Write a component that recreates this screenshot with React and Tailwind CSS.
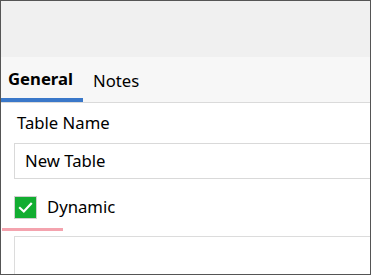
export default function App() {
  return (
    <div className="w-[372px] h-[276px] bg-white">
      <div
        className="w-[371px] h-[275px] border border-[#555555] bg-white overflow-hidden flex flex-col"
        style={{ fontFamily: '"Noto Sans", "Open Sans", sans-serif' }}
      >
        <div className="h-[56px] shrink-0 bg-[#f0f0f0]" />
        <div className="h-[45px] shrink-0 bg-[#f7f7f7] flex items-end">
          <div className="w-[82px] h-full flex flex-col">
            <div className="flex-1 flex items-center pl-[7px] pt-[2px] text-[16.7px] font-bold text-black">General</div>
            <div className="h-[4px] bg-[#3a78c9]" />
          </div>
          <div className="h-full flex items-center pl-[10px] pt-[2px] text-[16.7px] text-black">Notes</div>
        </div>
        <div className="h-[1px] shrink-0 bg-[#dadada]" />
        <div className="flex-1 flex flex-col">
          <div className="h-[40px] shrink-0 flex items-center pl-[16px] text-[16.7px] text-black">Table Name</div>
          <div className="ml-[13px] w-[380px] h-[36px] shrink-0 border border-[#d9d9d9] bg-white flex items-center pl-[10px] text-[16.7px] text-black">
            New Table
          </div>
          <div className="h-[16px] shrink-0" />
          <div className="ml-[13px] flex items-center h-[24px] shrink-0">
            <div className="w-[23px] h-[23px] border border-[#cfcfcf] bg-[#12ad31] flex items-center justify-center">
              <svg width="17" height="17" viewBox="0 0 17 17">
                <path d="M3 9 L6.8 12.5 L14 4.8" fill="none" stroke="white" strokeWidth="2.2" strokeLinecap="square" />
              </svg>
            </div>
            <div className="ml-[10px] text-[16.7px] text-black">Dynamic</div>
          </div>
          <div className="h-[9px] shrink-0" />
          <div className="ml-[1px] w-[61px] h-[3px] shrink-0 bg-[#f4a3ae]" />
          <div className="h-[5px] shrink-0" />
          <div className="ml-[13px] w-[380px] h-[60px] shrink-0 border border-[#dcdcdc] bg-white" />
        </div>
      </div>
    </div>
  );
}
